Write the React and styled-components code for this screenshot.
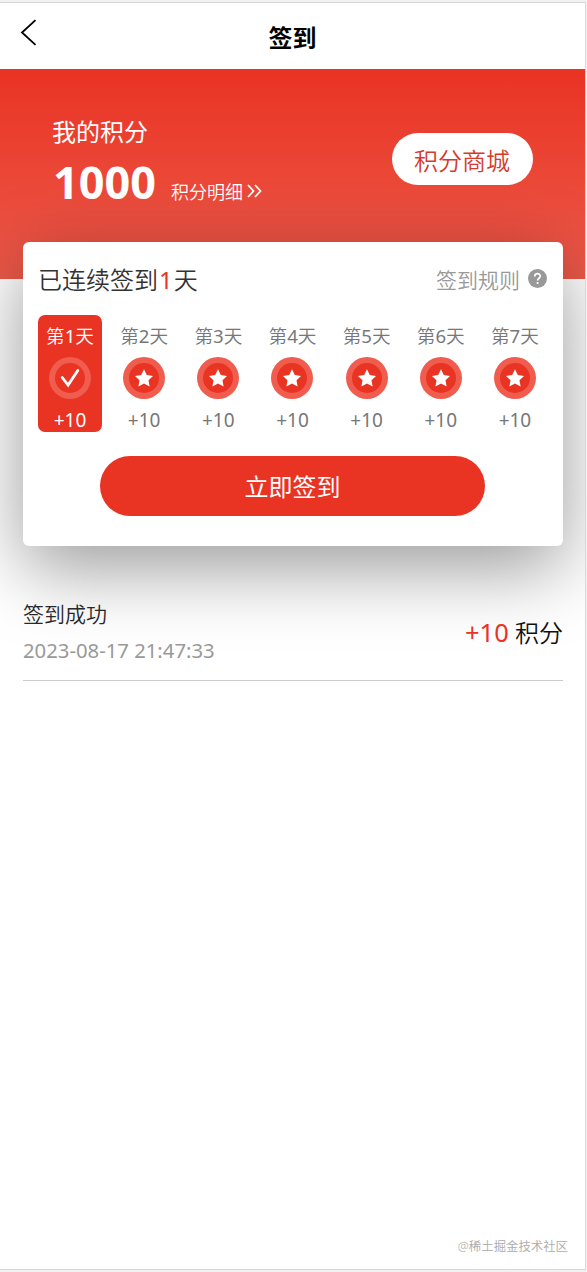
import React, { useState } from 'react';
import styled, { createGlobalStyle } from 'styled-components';

const GlobalStyle = createGlobalStyle`
  * {
    box-sizing: border-box;
  }
  body {
    margin: 0;
    background: #f1f1f1;
    font-family: 'Noto Sans', 'Noto Sans CJK SC', sans-serif;
  }
`;

const Page = styled.div`
  position: relative;
  width: 586px;
  height: 1268px;
  margin-top: 2px;
  overflow: hidden;
  background: #fff;
  border: 1px solid #d9d9d9;
  border-left: 0;
`;

const Header = styled.header`
  display: grid;
  grid-template-columns: 60px 1fr 60px;
  align-items: center;
  height: 66px;
  padding-top: 3px;
`;

const BackButton = styled.button`
  display: flex;
  width: 60px;
  padding: 0 0 10px 20px;
  border: 0;
  background: none;
`;

const Title = styled.h1`
  margin: 0;
  font-size: 24px;
  line-height: 36px;
  font-weight: 700;
  text-align: center;
  color: #000;
`;

const Hero = styled.section`
  display: flex;
  justify-content: space-between;
  align-items: flex-start;
  height: 210px;
  padding: 45px 52px 0;
  color: #fff;
  background: linear-gradient(#e93323, #ed5a4a);
`;

const PointsLabel = styled.div`
  font-size: 24px;
  line-height: 36px;
`;

const PointsRow = styled.div`
  display: flex;
  align-items: baseline;
  line-height: 64px;
`;

const Points = styled.strong`
  margin-left: 1px;
  font-size: 45px;
  font-weight: 700;
`;

const DetailLink = styled.span`
  margin-left: 15px;
  font-size: 18px;
  font-weight: 350;

  svg {
    margin-left: 4px;
  }
`;

const MallButton = styled.button`
  width: 141px;
  height: 52px;
  margin-top: 19px;
  padding: 0 1px 0 0;
  border: 0;
  border-radius: 26px;
  background: #fff;
  color: #d63a2c;
  font-family: inherit;
  font-size: 24px;
  font-weight: 350;
`;

const Card = styled.section`
  position: relative;
  height: 304px;
  margin: -37px 22px 0 23px;
  padding: 19px 16px 0 15px;
  border-radius: 6px;
  background: #fff;
  box-shadow: 0 22px 75px rgba(0, 0, 0, 0.4);
`;

const CardHead = styled.div`
  display: flex;
  justify-content: space-between;
  height: 54px;
  line-height: 38px;
  font-weight: 350;
`;

const Streak = styled.div`
  font-size: 24px;
  color: #333;
`;

const StreakCount = styled.span`
  margin: 0 1px;
  font-weight: 400;
  color: #e93323;
`;

const Rules = styled.div`
  display: flex;
  font-size: 21px;
  color: #999;

  svg {
    margin: 8px 0 0 8px;
  }
`;

const Days = styled.div`
  display: flex;
  justify-content: space-between;
`;

const Day = styled.div`
  display: flex;
  flex-direction: column;
  align-items: center;
  width: 64px;
  height: 117px;
  padding-top: 7px;
  border-radius: 7px;
  font-size: 18.6px;
  line-height: 28px;
  font-weight: 350;
  color: ${props => props.$active ? '#fff' : '#777'};
  background: ${props => props.$active ? '#e93323' : 'transparent'};

  svg {
    flex-shrink: 0;
    margin: 7px 0;
  }
`;

const DayNumber = styled.span`
  font-weight: 400;
`;

const Bonus = styled.span`
  font-size: 19px;
  font-weight: 400;
`;

const SignButton = styled.button`
  display: block;
  width: 385px;
  height: 60px;
  margin: 24px 0 0 62px;
  padding: 0 0 1px;
  border: 0;
  border-radius: 30px;
  background: #e93323;
  color: #fff;
  font-family: inherit;
  font-size: 24px;
`;

const Record = styled.div`
  position: relative;
  display: flex;
  justify-content: space-between;
  align-items: center;
  height: 93px;
  margin: 42px 22px 0 23px;
  padding-bottom: 5px;
  border-bottom: 1px solid #ccc;
`;

const RecordName = styled.div`
  font-size: 21px;
  line-height: 36px;
  font-weight: 350;
  color: #282828;
`;

const RecordTime = styled.div`
  font-size: 20.3px;
  line-height: 36px;
  color: #999;
`;

const RecordPoints = styled.div`
  font-size: 24px;
  font-weight: 350;
  color: #111;
`;

const RecordBonus = styled.span`
  font-size: 25.5px;
  font-weight: 400;
  color: #e93323;
`;

const Watermark = styled.div`
  position: absolute;
  right: 17px;
  bottom: 12px;
  font-size: 12.4px;
  line-height: 20px;
  font-weight: 350;
  color: #aaa;
`;

const StarBadge = () => (
  <svg width="42" height="42" viewBox="0 0 42 42">
    <circle cx="21" cy="21" r="21" fill="#f05c4d" />
    <circle cx="21" cy="21" r="15" fill="#e93323" />
    <path d="M21 12.3l2.8 5.7 6.2.9-4.5 4.4 1.1 6.2-5.6-2.9-5.6 2.9 1.1-6.2-4.5-4.4 6.2-.9z" fill="#fff" />
  </svg>
)

const CheckBadge = () => (
  <svg width="42" height="42" viewBox="0 0 42 42">
    <circle cx="21" cy="21" r="21" fill="#f05c4d" />
    <circle cx="21" cy="21" r="15" fill="#e93323" />
    <path d="M13.2 20.5l5.9 7.6L28.8 13.5" fill="none" stroke="#fff" strokeWidth="2.8" strokeLinecap="round" />
  </svg>
)

const days = [1, 2, 3, 4, 5, 6, 7];

const App = () => {
  const [today] = useState(1);

  return (
    <>
      <GlobalStyle />
      <Page>
        <Header>
          <BackButton aria-label="返回">
            <svg width="17" height="27" viewBox="0 0 17 27">
              <path d="M15.5 1.2L2 13.5l13.5 12.3" fill="none" stroke="#000" strokeWidth="1.8" />
            </svg>
          </BackButton>
          <Title>签到</Title>
        </Header>
        <Hero>
          <div>
            <PointsLabel>我的积分</PointsLabel>
            <PointsRow>
              <Points>1000</Points>
              <DetailLink>
                积分明细
                <svg width="15" height="15" viewBox="0 0 15 15">
                  <path d="M1 1l5.5 6L1 13M8 1l5.5 6L8 13" fill="none" stroke="#fff" strokeWidth="1.8" />
                </svg>
              </DetailLink>
            </PointsRow>
          </div>
          <MallButton>积分商城</MallButton>
        </Hero>
        <Card>
          <CardHead>
            <Streak>已连续签到<StreakCount>{today}</StreakCount>天</Streak>
            <Rules>
              签到规则
              <svg width="19" height="19" viewBox="0 0 19 19">
                <circle cx="9.5" cy="9.5" r="9.5" fill="#999" />
                <path d="M6.7 7.5c0-3.8 5.8-3.6 5.6-.2-.1 1.9-2.7 2-2.7 4.1" fill="none" stroke="#fff" strokeWidth="1.7" />
                <circle cx="9.6" cy="14" r="1.1" fill="#fff" />
              </svg>
            </Rules>
          </CardHead>
          <Days>
            {days.map(day => (
              <Day key={day} $active={day === today}>
                <span>第<DayNumber>{day}</DayNumber>天</span>
                {day === today ? <CheckBadge /> : <StarBadge />}
                <Bonus>+10</Bonus>
              </Day>
            ))}
          </Days>
          <SignButton>立即签到</SignButton>
        </Card>
        <Record>
          <div>
            <RecordName>签到成功</RecordName>
            <RecordTime>2023-08-17 21:47:33</RecordTime>
          </div>
          <RecordPoints><RecordBonus>+10</RecordBonus> 积分</RecordPoints>
        </Record>
        <Watermark>@稀土掘金技术社区</Watermark>
      </Page>
    </>
  )
}
export default App;
